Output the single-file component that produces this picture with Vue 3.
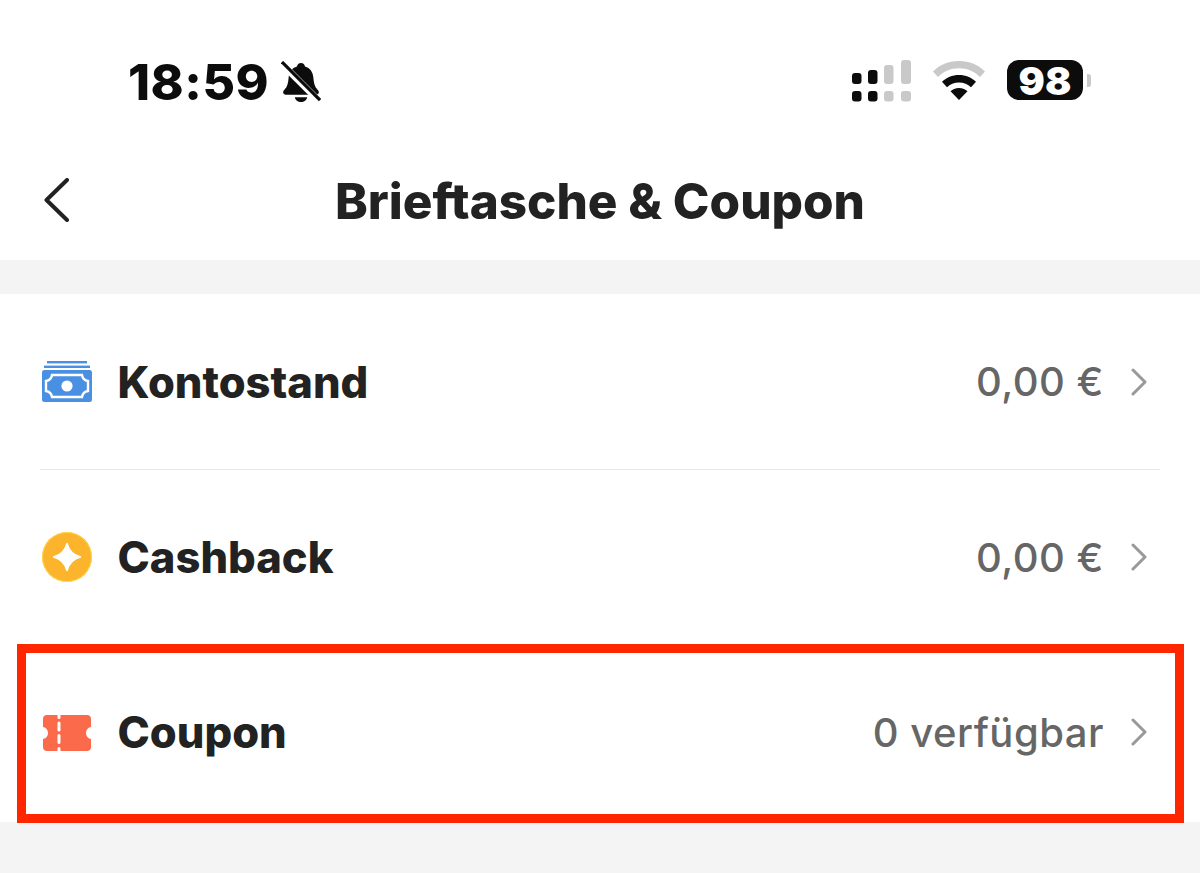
<script setup>
const rows = [
  { id: 'balance', label: 'Kontostand', value: '0,00 €' },
  { id: 'cashback', label: 'Cashback', value: '0,00 €' },
  { id: 'coupon', label: 'Coupon', value: '0 verfügbar' },
]
</script>

<template>
  <div class="page">
    <div class="status">
      <div class="status__left">
        <span class="status__time">18:59</span>
        <svg class="bell" width="40" height="42" viewBox="0 0 42 44">
          <path d="M21 2c2.400 0 4 1.800 4.200 3.800 5.500 1.600 8.300 6 8.800 11.700.4 5 1.300 9.500 4.200 12.500 1.400 1.500 2 2.700 1.200 4-.6 1-1.800 1.300-3.400 1.300H6c-1.600 0-2.800-.3-3.400-1.300-.8-1.300-.2-2.500 1.200-4 2.900-3 3.800-7.500 4.200-12.500.5-5.700 3.300-10.100 8.800-11.700C17 3.800 18.600 2 21 2z" fill="#0c0c0c" />
          <path d="M14.500 38h13c-.5 3-3.200 5-6.500 5s-6-2-6.500-5z" fill="#0c0c0c" />
          <path d="M1 3 41 43" stroke="#fff" stroke-width="7" />
          <path d="M1 1 41 41" stroke="#0c0c0c" stroke-width="3.400" />
        </svg>
      </div>
      <div class="status__right">
        <svg width="62" height="44" viewBox="0 0 62 44">
          <rect x="1" y="13" width="9.500" height="11" rx="3" fill="#0c0c0c" />
          <rect x="17" y="10" width="9.500" height="14" rx="3" fill="#0c0c0c" />
          <rect x="33" y="5" width="9.500" height="19" rx="3" fill="#c9c9c9" />
          <rect x="50" y="0" width="10" height="24" rx="3" fill="#c9c9c9" />
          <rect x="1" y="31" width="9.500" height="10.500" rx="3" fill="#0c0c0c" />
          <rect x="17" y="31" width="9.500" height="10.500" rx="3" fill="#0c0c0c" />
          <rect x="33" y="31" width="9.500" height="10.500" rx="3" fill="#c9c9c9" />
          <rect x="50" y="31" width="10" height="10.500" rx="3" fill="#c9c9c9" />
        </svg>
        <svg class="wifi" width="54" height="40" viewBox="0 0 54 40">
          <path d="M27 1C16.500 1 7.500 5 1 11.500l5 5.500C11.500 11.500 18.800 8.300 27 8.300S42.500 11.500 48 17l5-5.500C46.500 5 37.500 1 27 1z" fill="#c9c9c9" />
          <path d="M27 15c-6.800 0-12.500 2.600-17 6.800l5 5.400c3.100-2.800 7.200-4.600 12-4.600s8.900 1.800 12 4.600l5-5.400C39.500 17.600 33.800 15 27 15z" fill="#0c0c0c" />
          <path d="M27 28c-3.600 0-6.500 1.300-8.500 3.200L27 40l8.500-8.800C33.500 29.300 30.600 28 27 28z" fill="#0c0c0c" />
        </svg>
        <div class="battery">
          <span class="battery__body">98</span>
          <span class="battery__cap"></span>
        </div>
      </div>
    </div>

    <div class="nav">
      <svg class="nav__back" width="28" height="44" viewBox="0 0 28 44">
        <path d="M25 2 4.500 22 25 42" fill="none" stroke="#222" stroke-width="4" stroke-linecap="round" stroke-linejoin="round" />
      </svg>
      <span class="nav__title">Brieftasche &amp; Coupon</span>
    </div>

    <div class="list">
      <div v-for="r in rows" :key="r.id" class="row" :class="`row--${r.id}`">
        <svg v-if="r.id === 'balance'" class="row__icon" width="52" height="42" viewBox="0 0 52 42">
          <rect x="6" y="0" width="40" height="2.400" fill="#4a90e2" />
          <rect x="3" y="4.600" width="46" height="2.400" fill="#4a90e2" />
          <rect x="1" y="9" width="50" height="32" rx="2.500" fill="#4a90e2" />
          <path d="M11 14h30c.6 3.500 2.500 5.400 6 6v10c-3.500.6-5.400 2.500-6 6H11c-.6-3.500-2.500-5.400-6-6V20c3.500-.6 5.400-2.500 6-6z" fill="none" stroke="#fff" stroke-width="2.400" />
          <circle cx="26" cy="25" r="5.600" fill="#fff" />
        </svg>
        <svg v-else-if="r.id === 'cashback'" class="row__icon" width="52" height="52" viewBox="0 0 52 52">
          <circle cx="26" cy="26" r="25" fill="#fbb42c" />
          <circle cx="26" cy="26" r="24.500" fill="none" stroke="#fcdc50" stroke-width="1" />
          <path d="M26 12.500c2 7.500 6 11.500 13.500 13.500-7.500 2-11.500 6-13.500 13.500-2-7.500-6-11.500-13.500-13.500 7.500-2 11.500-6 13.500-13.500z" fill="#fff" stroke="#fff" stroke-width="1.500" stroke-linejoin="round" />
        </svg>
        <svg v-else class="row__icon row__icon--coupon" width="52" height="36" viewBox="0 0 52 36">
          <path d="M6 0h40c2.500 0 4 1.500 4 4v8c-3.500.8-5 3-5 6s1.500 5.200 5 6v8c0 2.500-1.500 4-4 4H6c-2.500 0-4-1.500-4-4v-8c3.500-.8 5-3 5-6s-1.500-5.200-5-6V4c0-2.500 1.500-4 4-4z" fill="#fb6a4a" />
          <path d="M18 0v2.500M18 8v7M18 20.500v7M18 33.500v2.500" stroke="#fff" stroke-width="3" stroke-linecap="round" />
        </svg>
        <span class="row__label">{{ r.label }}</span>
        <span class="row__value">{{ r.value }}</span>
        <svg class="row__arrow" width="16" height="28" viewBox="0 0 16 28">
          <path d="M2 2 14 14 2 26" fill="none" stroke="#999" stroke-width="3" stroke-linecap="round" stroke-linejoin="round" />
        </svg>
        <div v-if="r.id === 'coupon'" class="highlight"></div>
      </div>
    </div>
    <div class="rest"></div>
  </div>
</template>

<style scoped>
.page {
  width: 1200px;
  height: 873px;
  overflow: hidden;
  background: #f4f4f4;
  font-family: Inter, "Liberation Sans", sans-serif;
  color: #222;
}
.status {
  height: 146px;
  background: #fff;
  box-sizing: border-box;
  padding: 60px 109px 0 128px;
  display: flex;
  justify-content: space-between;
  align-items: flex-start;
}
.status__left {
  display: flex;
  align-items: center;
  gap: 12px;
}
.status__time {
  font-size: 50px;
  line-height: 44px;
  font-weight: 800;
  color: #0c0c0c;
  letter-spacing: 0.5px;
}
.status__right {
  display: flex;
  align-items: flex-start;
  gap: 19px;
}
.wifi {
  margin-right: 2px;
}
.battery {
  display: flex;
  align-items: center;
  gap: 4px;
}
.battery__body {
  width: 76px;
  height: 40px;
  background: #0c0c0c;
  border-radius: 12px;
  color: #fff;
  font-size: 39px;
  line-height: 41px;
  font-weight: 900;
  text-align: center;
}
.battery__cap {
  width: 4px;
  height: 13px;
  background: #c9c9c9;
  border-radius: 0 3px 3px 0;
}
.nav {
  height: 114px;
  background: #fff;
  display: flex;
  align-items: flex-start;
  justify-content: center;
  position: relative;
}
.nav__back {
  position: absolute;
  left: 42px;
  top: 32px;
}
.nav__title {
  margin-top: 28px;
  font-size: 49.4px;
  line-height: 54px;
  font-weight: 800;
}
.list {
  margin-top: 34px;
  background: #fff;
  padding: 0 40px 1px;
}
.row {
  height: 175px;
  display: flex;
  align-items: center;
  position: relative;
}
.row--balance {
  border-bottom: 1px solid #e8e8e8;
}
.row--cashback {
  height: 174px;
}
.row--coupon {
  height: 176px;
  padding-bottom: 1px;
}
.row__icon {
  margin-left: 1px;
}
.row__icon--coupon {
  margin-top: 2px;
}
.row__label {
  margin-left: 24.5px;
  font-size: 43.5px;
  font-weight: 800;
  flex: 1;
}
.row__value {
  font-size: 40px;
  font-weight: 500;
  color: #666;
  letter-spacing: 0.5px;
}
.row__arrow {
  margin-left: 27px;
  margin-right: 13px;
}
.highlight {
  position: absolute;
  left: -23px;
  right: -24px;
  top: 0;
  bottom: -2px;
  border: 9px solid #ff2600;
  pointer-events: none;
}
</style>

<style>
html, body {
  background: #fff;
}
</style>
